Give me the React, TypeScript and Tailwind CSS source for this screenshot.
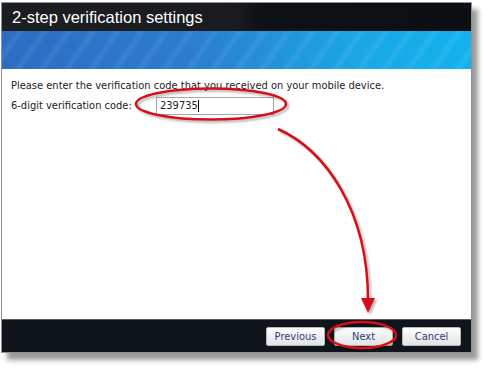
import React from 'react';

const bodyFont = "font-['Tahoma','DejaVu_Sans_Condensed','DejaVu_Sans',sans-serif]";

function DialogButton({ label }: { label: string }) {
  return (
    <button
      className={`w-[59px] h-[19px] rounded-[2px] border border-[#b4b8bd] bg-[linear-gradient(#fdfdfd,#e2e3e5)] text-[11px] leading-none text-[#2b3f7c] ${bodyFont}`}
    >
      {label}
    </button>
  );
}

export default function App() {
  return (
    <div className="relative w-[488px] h-[368px] bg-white overflow-hidden">
      <div className="ml-[1px] mt-[2px] w-[471px] border border-[#8f9296] shadow-[6px_7px_5px_rgba(0,0,0,0.4)] flex flex-col">
        {/* title bar */}
        <div className="h-[28px] flex items-center pl-[10px] bg-[linear-gradient(90deg,#1c1e22_0%,#191b1f_50%,#0d1015_55%,#0b0e13_100%)]">
          <h1 className="text-white text-[16.5px] font-['Liberation_Sans',Arial,sans-serif] leading-none">
            2-step verification settings
          </h1>
        </div>

        {/* blue banner */}
        <div className="h-[38px] bg-[repeating-linear-gradient(125deg,rgba(255,255,255,0)_0px,rgba(255,255,255,0)_10px,rgba(255,255,255,0.08)_15px,rgba(255,255,255,0)_20px),linear-gradient(90deg,#2c6cc3_0%,#2b7dcf_40%,#1ba6e5_75%,#12b2ee_100%)]" />

        {/* body */}
        <div className={`h-[250px] bg-white px-[9px] pt-[10px] text-[11px] text-[#222] ${bodyFont}`}>
          <p className="leading-[13px]">
            Please enter the verification code that you received on your mobile device.
          </p>
          <div className="mt-[5px] flex items-center">
            <label className="w-[145px]">6-digit verification code:</label>
            <div className="w-[118px] h-[18px] border border-[#a4a8ae] bg-white flex items-center pl-[3px]">
              <span>239735</span>
              <span className="w-[1px] h-[12px] bg-black" />
            </div>
          </div>
        </div>

        {/* footer */}
        <div className="h-[33px] border-t border-[#5a5e63] bg-[#0f151b] flex items-center justify-end gap-[9px] pr-[10px]">
          <DialogButton label="Previous" />
          <DialogButton label="Next" />
          <DialogButton label="Cancel" />
        </div>
      </div>

      {/* annotations */}
      <svg className="absolute inset-0 pointer-events-none" width="488" height="368" viewBox="0 0 488 368">
        <defs>
          <filter id="sh" x="-20%" y="-20%" width="140%" height="140%">
            <feDropShadow dx="2" dy="2" stdDeviation="1.2" floodColor="#000" floodOpacity="0.3" />
          </filter>
        </defs>
        <g filter="url(#sh)" fill="none" stroke="#d8101a" strokeWidth="2.5">
          <ellipse cx="211" cy="104" rx="75" ry="15.5" />
          <ellipse cx="362" cy="335" rx="34" ry="13" />
          <path d="M278 129 C325 150 368 210 368 300" />
        </g>
        <g filter="url(#sh)">
          <polygon points="361,298 375,298 368,313" fill="#d8101a" />
        </g>
      </svg>
    </div>
  );
}
